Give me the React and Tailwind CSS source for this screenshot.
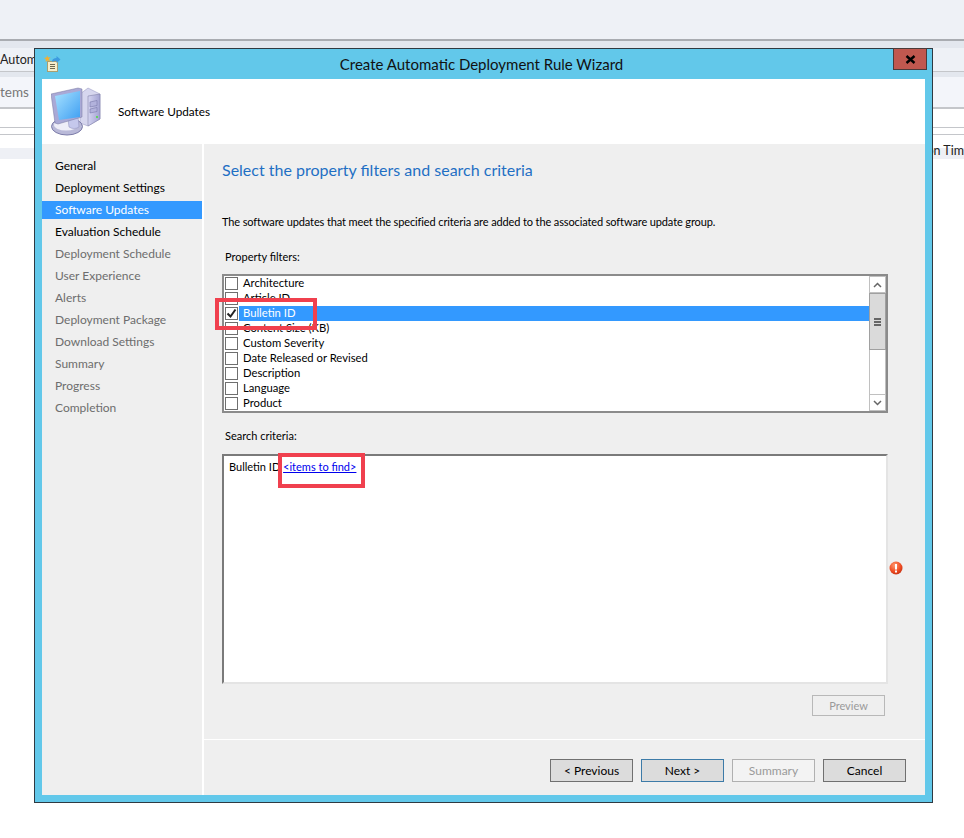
const nav = [
  ["General", "text-black"],
  ["Deployment Settings", "text-black"],
  ["Software Updates", "sel"],
  ["Evaluation Schedule", "text-black"],
  ["Deployment Schedule", "text-[#6d6d6d]"],
  ["User Experience", "text-[#6d6d6d]"],
  ["Alerts", "text-[#6d6d6d]"],
  ["Deployment Package", "text-[#6d6d6d]"],
  ["Download Settings", "text-[#6d6d6d]"],
  ["Summary", "text-[#6d6d6d]"],
  ["Progress", "text-[#6d6d6d]"],
  ["Completion", "text-[#6d6d6d]"],
];
const filters = ["Architecture", "Article ID", "Bulletin ID", "Content Size (KB)", "Custom Severity", "Date Released or Revised", "Description", "Language", "Product"];

function TitleIcon() {
  return (
    <svg width="18" height="18" viewBox="0 0 18 18" className="shrink-0">
      <rect x="4.500" y="6.500" width="10" height="10" fill="#f6eecb" stroke="#a89f70" />
      <path d="M7 9.500h5M7 11.500h5M7 13.500h5" stroke="#6e6a50" />
      <path d="M4 0l1 2.500L7.500 2 6 4l1 2.500L4.500 5.500 2.500 7 3 4.500 1 3l2.500-.5z" fill="#f5b030" />
      <path d="M9 7c0-3 2-4 4.500-4V1L17.500 4.500 13.500 8V6C12 6 10 6 9 7z" fill="#3d9be0" />
    </svg>
  );
}

function ComputerIcon() {
  return (
    <svg width="50" height="49" viewBox="0 0 50 49" className="shrink-0">
      <defs>
        <linearGradient id="scr" x1="0" y1="0" x2="1" y2="1">
          <stop offset="0" stopColor="#a8e2ff" />
          <stop offset="1" stopColor="#3f9ff2" />
        </linearGradient>
        <linearGradient id="tower" x1="0" y1="0" x2="1" y2="0">
          <stop offset="0" stopColor="#d4d4f0" />
          <stop offset="1" stopColor="#a2a2d2" />
        </linearGradient>
      </defs>
      <path d="M29 7l8-6 12 6v25l-12 7-8-3z" fill="#d6d6ee" stroke="#9090bc" strokeWidth="0.500" />
      <path d="M37 9l12-2v25l-12 7z" fill="url(#tower)" stroke="#77779f" strokeWidth="0.500" />
      <path d="M39 15l7-1.500v5l-7 1.500zM39 22l7-1.500v4l-7 1.500z" fill="#b2b2dc" stroke="#6e6ea0" strokeWidth="0.500" />
      <rect x="45" y="29" width="2" height="2" fill="#5fd35f" />
      <ellipse cx="16" cy="39.500" rx="15.500" ry="8.500" fill="#b9b9d8" stroke="#7a7aa8" />
      <ellipse cx="15" cy="38" rx="12" ry="5.500" fill="#eeeef8" />
      <path d="M17 32l10-3 1 11c-3 2-7 2-10 0z" fill="#c5c8ec" stroke="#8a8ab8" strokeWidth="0.500" />
      <path d="M0 7L27 1l4 1v28L7 37l-3-1z" fill="#a9a9d6" stroke="#77779f" strokeWidth="0.500" />
      <path d="M4 9l25-5v26L8 33z" fill="url(#scr)" />
    </svg>
  );
}

function Button({ children, variant = "normal" }) {
  const styles = {
    normal: "border-[#707070] bg-[#dcdcdc] text-black",
    focus: "border-[#3d7ba8] bg-[#dcdcdc] text-black",
    disabled: "border-[#b0b0b0] bg-[#f3f3f3] text-[#9a9a9a]",
    flat: "border-[#b8b8b8] bg-[#efefef] text-[#9a9a9a]",
  };
  const size = variant === "flat" ? "h-[21px] w-[73px] text-[11px]" : "h-[23px] w-[83px] text-[12px]";
  return (
    <div className={`flex items-center justify-center border leading-none ${variant === "flat" ? "" : "pt-[1px]"} ${size} ${styles[variant]}`}>
      {children}
    </div>
  );
}

function BackgroundRows() {
  return (
    <div className="relative flex h-[838px] w-[964px] flex-col bg-white text-[12.500px] text-[#333]">
      <div className="h-[39px] shrink-0 bg-[#eef1f6]" />
      <div className="h-[2px] shrink-0 bg-[#a9acb1]" />
      <div className="h-[7px] shrink-0 bg-[#e3e7ee]" />
      <div className="flex h-[24px] shrink-0 items-center border-b border-[#c4c6ca] bg-[#eef1f6] pt-[2px]">
        <span className="whitespace-nowrap text-[#222]">Autom</span>
      </div>
      <div className="h-[5px] shrink-0 bg-[#e3e7ee]" />
      <div className="flex h-[32px] shrink-0 items-center border-b-2 border-[#c4c6ca] bg-[#f3f5fa] pt-[1px]">
        <span className="text-[13.500px] text-[#777]">tems</span>
      </div>
      <div className="h-[19px] shrink-0 border-b border-[#c4c6ca] bg-white" />
      <div className="h-[7px] shrink-0 border-b border-[#c4c6ca] bg-white" />
      <div className="h-[13px] shrink-0 bg-white" />
      <div className="h-[11px] shrink-0 bg-[#eef0f5]" />
      <span className="absolute right-0 top-[142px] whitespace-nowrap leading-[18px] text-[#222]">on Tim</span>
    </div>
  );
}

function Scrollbar() {
  return (
    <div className="flex h-full w-[17px] shrink-0 flex-col">
      <div className="flex h-[17px] shrink-0 items-center justify-center border border-[#c0c0c0] bg-white">
        <svg width="9" height="6" viewBox="0 0 9 6"><path d="M1 5l3.500-3.500L8 5" fill="none" stroke="#666" strokeWidth="1.500" /></svg>
      </div>
      <div className="flex h-[57px] shrink-0 flex-col items-center justify-center gap-[1px] border border-[#a0a0a0] bg-[#dadada]">
        <div className="h-[2px] w-[7px] bg-[#666]" />
        <div className="h-[2px] w-[7px] bg-[#666]" />
        <div className="h-[2px] w-[7px] bg-[#666]" />
      </div>
      <div className="flex-1 border-x border-[#c0c0c0] bg-white" />
      <div className="flex h-[17px] shrink-0 items-center justify-center border border-[#c0c0c0] bg-white">
        <svg width="9" height="6" viewBox="0 0 9 6"><path d="M1 1l3.500 3.500L8 1" fill="none" stroke="#666" strokeWidth="1.500" /></svg>
      </div>
    </div>
  );
}

function FilterRow({ label }) {
  const sel = label === "Bulletin ID";
  return (
    <div className="flex h-[15px] items-center">
      <div className="ml-[1px] flex h-[13px] w-[13px] shrink-0 items-center justify-center border border-[#6f6f6f] bg-white">
        {sel && (
          <svg width="11" height="11" viewBox="0 0 11 11"><path d="M1.500 5.500l3 3L9.500 1.500" fill="none" stroke="#222" strokeWidth="2" /></svg>
        )}
      </div>
      <div className={`ml-[1px] flex h-[15px] flex-1 items-center pb-[1px] pl-[4px] ${sel ? "bg-[#3399ff] text-white" : "text-black"}`}>
        {label}
      </div>
    </div>
  );
}

export default function App() {
  return (
    <div className="relative h-[838px] w-[964px] overflow-hidden bg-white font-['Lato',sans-serif]">
      <BackgroundRows />

      {/* Dialog window */}
      <div className="absolute left-[34px] top-[48px] flex h-[755px] w-[899px] flex-col border border-[#2f3a42] bg-[#62c8ea] px-[7px] pb-[7px]">
        <div className="relative flex h-[30px] shrink-0 items-center">
          <div className="ml-[1px] mt-[-1px]"><TitleIcon /></div>
          <div className="absolute inset-x-0 top-[4px] pr-[4px] text-center text-[15px] leading-[22px] text-[#111]">
            Create Automatic Deployment Rule Wizard
          </div>
          <div className="absolute right-[-2px] top-[-1px] flex h-[22px] w-[34px] items-center justify-center border border-[#4a3b3b] bg-[#c0584f]">
            <svg width="11" height="9" viewBox="0 0 11 9"><path d="M1.500 1l8 7M9.500 1l-8 7" stroke="#000" strokeWidth="2.400" /></svg>
          </div>
        </div>

        <div className="flex min-h-0 flex-1 flex-col bg-white">
          <div className="flex h-[65px] shrink-0 items-center pl-[9px]">
            <ComputerIcon />
            <div className="ml-[17px] pt-[1px] text-[11.750px] text-black">Software Updates</div>
          </div>

          <div className="flex min-h-0 flex-1">
            <div className="w-[160px] shrink-0 bg-[#efefef] pt-[11px]">
              {nav.map(([label, cls]) => (
                <div key={label} className="flex h-[22px] items-center">
                  <div className={`flex h-[18px] w-full items-center pl-[13px] text-[12px] ${cls === "sel" ? "bg-[#3399ff] text-white" : cls}`}>
                    {label}
                  </div>
                </div>
              ))}
            </div>

            <div className="ml-[2px] flex min-w-0 flex-1 flex-col bg-[#efefef]">
              <div className="relative flex-1 pl-[18px] pr-[37px]">
                <div className="pt-[14px] text-[16px] leading-[23px] text-[#1f6fc4]">Select the property filters and search criteria</div>
                <div className="mt-[33px] text-[11px] leading-[16px] tracking-[-0.12px] text-black">
                  The software updates that meet the specified criteria are added to the associated software update group.
                </div>
                <div className="ml-[3px] mt-[19px] text-[11px] leading-[16px] text-black">Property filters:</div>

                <div className="mt-[9px] flex h-[139px] border-2 border-[#8b8b8b] bg-white text-[11.250px] leading-none">
                  <div className="min-w-0 flex-1">
                    {filters.map((f) => <FilterRow key={f} label={f} />)}
                  </div>
                  <Scrollbar />
                </div>

                <div className="ml-[3px] mt-[15px] text-[11px] leading-[16px] text-black">Search criteria:</div>

                <div className="mt-[10px] h-[230px] border-2 border-[#7a7a7a] border-b-[#e4e4e4] border-r-[#e4e4e4] bg-white pl-[5px] pt-[3px] text-[11px] leading-[16px] text-black">
                  Bulletin ID <span className="text-[#0000ee] underline">&lt;items to find&gt;</span>
                </div>

                <div className="mt-[11px] flex justify-end pr-[3px]">
                  <Button variant="flat">Preview</Button>
                </div>

                {/* validation icon */}
                <div className="absolute left-[685px] top-[417px] h-[14px] w-[14px]">
                  <svg width="14" height="14" viewBox="0 0 14 14">
                    <defs>
                      <radialGradient id="err" cx="0.400" cy="0.300" r="0.800">
                        <stop offset="0" stopColor="#ff9a70" />
                        <stop offset="0.600" stopColor="#ee4a20" />
                        <stop offset="1" stopColor="#b82a10" />
                      </radialGradient>
                    </defs>
                    <circle cx="7" cy="7" r="6.500" fill="url(#err)" />
                    <rect x="6" y="3" width="2" height="5.500" fill="#fff" />
                    <rect x="6" y="9.500" width="2" height="2" fill="#fff" />
                  </svg>
                </div>
              </div>

              <div className="h-[1px] shrink-0 bg-white" />
              <div className="flex h-[55px] shrink-0 items-start justify-end gap-[8px] pr-[19px] pt-[19px]">
                <Button>&lt; Previous</Button>
                <Button variant="focus">Next &gt;</Button>
                <Button variant="disabled">Summary</Button>
                <Button>Cancel</Button>
              </div>
            </div>
          </div>
        </div>
      </div>

      {/* annotation rectangles */}
      <div className="absolute left-[215px] top-[298px] h-[32px] w-[102px] border-[4px] border-[#f0404e]" />
      <div className="absolute left-[278px] top-[453px] h-[35px] w-[87px] border-[4px] border-[#f0404e]" />
    </div>
  );
}
